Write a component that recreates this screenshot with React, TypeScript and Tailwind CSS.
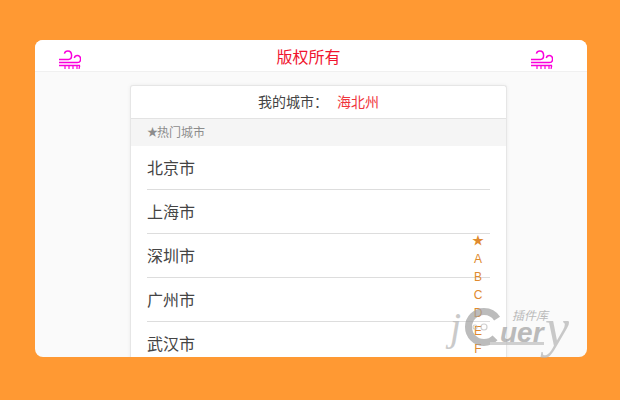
import React from "react";

const font = { fontFamily: '"Noto Sans CJK SC", "Noto Sans", sans-serif' };

function Wind() {
  return (
    <svg width="22" height="19" viewBox="0 0 22 19" fill="none" stroke="#fa00dc" strokeWidth="1.5" className="shrink-0">
      <path d="M0 9.5H9.5C11.4 9.5 12.6 8 12.6 5.6C12.6 3 11.2 1 8.8 1C7 1 5.8 2 5.4 3.6" />
      <path d="M0 12.5H18.2C20.4 12.5 21.6 11.2 21.6 9.2C21.6 7 20.2 5.6 18.4 5.6C16.8 5.6 15.6 6.6 15.3 8" />
      <path d="M0 15.5H21" />
      <path d="M6 15.5V19M10 15.5V19M14 15.5V19M18 15.5V19M20.8 15.5L20 19" strokeWidth="1.2" />
    </svg>
  );
}

const cities = ["北京市", "上海市", "深圳市", "广州市", "武汉市"];
const letters = ["A", "B", "C", "D", "E", "F"];

export default function App() {
  return (
    <div className="relative h-[400px] w-[620px] overflow-hidden bg-[#ff9933] pl-[35px] pt-[40px]" style={font}>
      <div className="relative h-[317px] w-[552px] overflow-hidden rounded-lg bg-[#fafafa]">
        <header className="flex h-[32px] items-center justify-between border-b border-[#f0f0f0] bg-white pb-[1px] pl-[24px] pr-[34px] pt-[8px]">
          <Wind />
          <span className="ml-[5px] -translate-y-[3px] text-[16px] leading-[22px] text-[#f0142f]">版权所有</span>
          <Wind />
        </header>
        <main className="ml-[95px] mt-[13px] w-[377px] rounded-t-[3px] border-x border-t border-[#e6e6e6] bg-white shadow-[0_0_4px_rgba(0,0,0,0.06)]">
          <div className="flex h-[33px] items-center justify-center border-b border-[#e3e3e3] pb-[1px] text-[14px]">
            <span className="text-[#444444]">我的城市：</span>
            <span className="ml-[9px] text-[#f0343c]">海北州</span>
          </div>
          <div className="flex h-[27px] items-center bg-[#f5f5f5] pb-[2px] pl-[16px] text-[12px] text-[#8c8c8c]">
            <span className="w-[10px] text-[11px]">★</span>热门城市
          </div>
          <ul className="px-[16px]">
            {cities.map((c) => (
              <li key={c} className="flex h-[44px] items-center border-b border-[#dddddd] pb-[2px] text-[16px] text-[#444444]">
                {c}
              </li>
            ))}
          </ul>
        </main>
        <div className="absolute left-[433px] top-[192px] flex w-[20px] flex-col items-center text-[12px] leading-[18px] text-[#e08a2e]" style={{ fontFamily: '"Liberation Sans", sans-serif' }}>
          <span className="h-[18px] text-[12px] leading-[16px]" style={font}>★</span>
          {letters.map((l) => (
            <span key={l}>{l}</span>
          ))}
        </div>
      </div>
      <div className="pointer-events-none absolute left-[448px] top-[305px] h-[50px] w-[130px] text-[#b4b4b4] opacity-70" style={{ fontFamily: '"Liberation Serif", serif' }}>
        <span className="absolute left-[2px] top-[2px] text-[40px] italic leading-[40px]">j</span>
        <svg className="absolute left-[16px] top-[1px]" width="42" height="42" viewBox="0 0 42 42" fill="none">
          <circle cx="20" cy="21" r="15.5" stroke="#a0a0a0" strokeWidth="7" strokeDasharray="76 22" strokeDashoffset="-12" />
          <circle cx="20" cy="21" r="3" stroke="#bdbdbd" strokeWidth="1.2" />
          <circle cx="11" cy="21" r="2" stroke="#bdbdbd" strokeWidth="1.2" />
        </svg>
        <span className="absolute left-[52px] top-[14px] text-[28px] font-bold italic leading-[28px] text-[#a0a0a0]" style={{ fontFamily: '"Liberation Sans", sans-serif' }}>uer</span>
        <span className="absolute left-[97px] top-[-4px] text-[54px] italic leading-[54px]">y</span>
        <span className="absolute left-[64px] top-[3px] text-[12px] italic leading-[13px] text-[#a0a0a0]" style={font}>插件库</span>
        <div className="absolute left-[42px] top-[37px] h-[3px] w-[54px] bg-[#bdbdbd]" />
      </div>
    </div>
  );
}
